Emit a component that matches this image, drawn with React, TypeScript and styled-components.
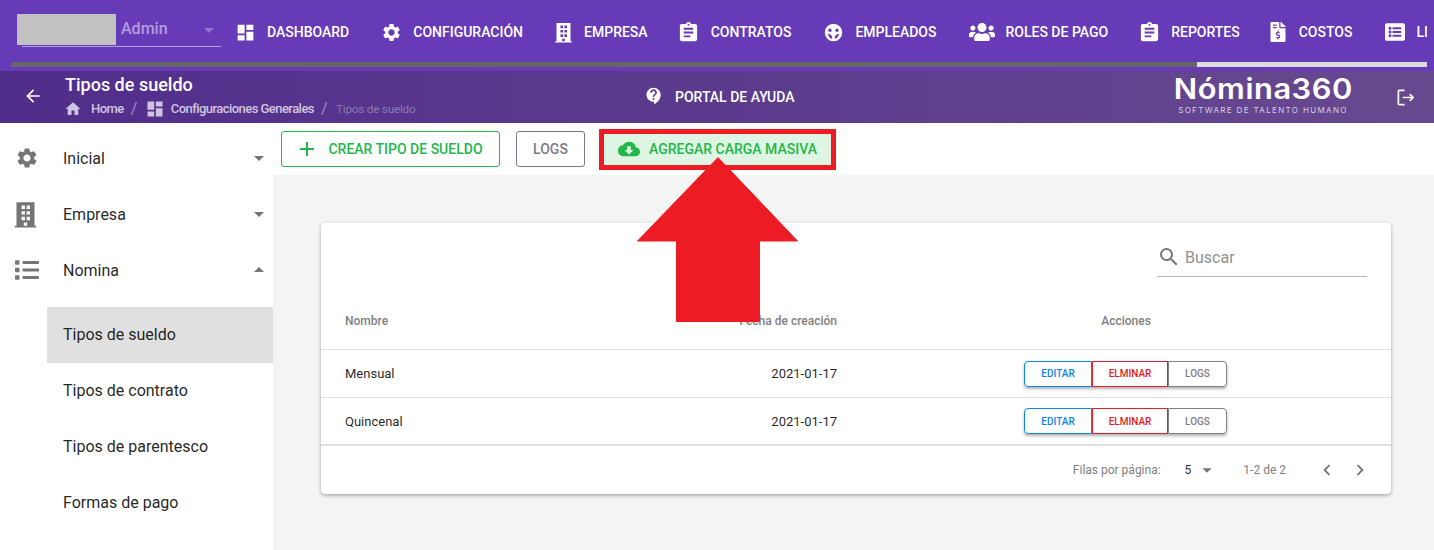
import React from "react";
import styled, { createGlobalStyle } from "styled-components";
import {
  MdDashboard, MdSettings, MdAssignment, MdArrowBack, MdHome, MdContactSupport, MdCloudDownload,
  MdSearch, MdChevronLeft, MdChevronRight, MdAdd, MdArrowDropDown, MdArrowDropUp,
} from "react-icons/md";
import { FaUsers, FaFileInvoiceDollar, FaList, FaListAlt } from "react-icons/fa";

const Global = createGlobalStyle`
  html, body { margin: 0; padding: 0; height: 100%; overflow: hidden; background: #fff; }
  body { font-family: Roboto, "Liberation Sans", sans-serif; }
  * { box-sizing: border-box; }
`;

const Page = styled.div`
  position: relative;
  width: 1434px;
  height: 550px;
  overflow: hidden;
  display: flex;
  flex-direction: column;
`;

const TopNav = styled.header`
  height: 71px;
  background: #673ab7;
  display: flex;
  flex-direction: column;
  flex-shrink: 0;
`;

const NavRow = styled.div`
  height: 62px;
  display: flex;
  align-items: center;
  padding: 2px 0 0 22px;
  margin-right: 7px;
  overflow: hidden;
`;

const RoleSelect = styled.div`
  width: 199px;
  height: 33px;
  margin-top: -3px;
  margin-right: 17px;
  flex-shrink: 0;
  display: flex;
  align-items: center;
  border-bottom: 1px solid #b39ddb;
  color: #b39ddb;
  font-size: 16px;
  font-weight: 500;
`;

const HiddenName = styled.div`
  width: 99px;
  height: 31px;
  margin: -2px 5px 0 -5px;
  background: #c1c1c1;
  flex-shrink: 0;
`;

const RoleLabel = styled.span`
  margin-top: -4px;
  flex: 1;
`;

const Caret = styled.span<{ $size?: number; $color: string; $ml?: number }>`
  display: inline-flex;
  color: ${(p) => p.$color};
  font-size: ${(p) => p.$size ?? 24}px;
  margin-left: ${(p) => p.$ml ?? 0}px;
  flex-shrink: 0;
`;

const NavItem = styled.div<{ $ml: number }>`
  display: flex;
  align-items: center;
  flex-shrink: 0;
  margin-left: ${(p) => p.$ml}px;
  margin-right: 33px;
  color: #fff;
  font-size: 14px;
  font-weight: 500;
  white-space: nowrap;
  &:last-child { margin-right: 0; }
`;

const NavIcon = styled.span<{ $w: number; $gap: number; $size: number }>`
  width: ${(p) => p.$w}px;
  margin-right: ${(p) => p.$gap}px;
  display: flex;
  justify-content: center;
  flex-shrink: 0;
  font-size: ${(p) => p.$size}px;
  svg { flex-shrink: 0; display: block; }
`;

const Progress = styled.div`
  height: 5px;
  margin: 0 7px 0 11px;
  background: #dcdcdc;
`;

const ProgressFill = styled.div`
  height: 100%;
  background: #666666;
`;

const SubHeader = styled.div`
  height: 52px;
  flex-shrink: 0;
  display: flex;
  align-items: center;
  background: linear-gradient(90deg, #512d8b 0%, #5c3b8e 50%, #67498f 100%);
  color: #fff;
`;

const TitleZone = styled.div`
  width: 646px;
  display: flex;
  align-items: center;
  padding-left: 21px;
  flex-shrink: 0;
`;

const BackIcon = styled.span`
  width: 24px;
  margin-right: 20px;
  margin-top: -2px;
  display: flex;
  font-size: 20px;
  justify-content: center;
`;

const TitleBlock = styled.div`
  display: flex;
  flex-direction: column;
  margin-top: -2px;
`;

const PageTitle = styled.div`
  font-size: 18px;
  font-weight: 500;
  line-height: 22px;
`;

const Crumbs = styled.div`
  display: flex;
  align-items: center;
  font-size: 13px;
  line-height: 18px;
  margin-top: 3px;
  color: #cfc4e2;
  font-weight: 500;
  letter-spacing: -0.55px;
`;

const CrumbIcon = styled.span<{ $gap: number; $ml?: number; $size: number }>`
  display: flex;
  font-size: ${(p) => p.$size}px;
  margin-left: ${(p) => p.$ml ?? 0}px;
  margin-right: ${(p) => p.$gap}px;
`;

const CrumbSep = styled.span`
  margin: 0 8px 0 7px;
  font-size: 16px;
  font-weight: 400;
  color: #9f8dbf;
`;

const CrumbLast = styled.span`
  font-weight: 400;
  font-size: 11.800px;
  letter-spacing: -0.25px;
  margin-left: 1px;
  color: #8d79b0;
`;

const Portal = styled.div`
  width: 528px;
  flex-shrink: 0;
  display: flex;
  align-items: center;
  font-size: 14px;
  font-weight: 500;
  white-space: nowrap;
`;

const PortalIcon = styled.span`
  width: 16px;
  margin-right: 13px;
  margin-top: -3px;
  display: flex;
  justify-content: center;
  font-size: 20px;
  svg { flex-shrink: 0; }
`;

const Logo = styled.div`
  width: 178px;
  flex-shrink: 0;
  display: flex;
  flex-direction: column;
  align-items: center;
  margin-top: -5px;
`;

const LogoName = styled.div`
  font-family: "Inter", "Noto Sans", sans-serif;
  font-size: 28px;
  font-weight: 600;
  line-height: 30px;
  letter-spacing: 0.5px;
  white-space: nowrap;
  transform: scaleX(1.1);
`;

const LogoTag = styled.div`
  font-family: "Inter", "Noto Sans", sans-serif;
  font-size: 8px;
  line-height: 9px;
  letter-spacing: 1.350px;
  color: #d7cfe6;
  white-space: nowrap;
  margin-top: 2px;
`;

const LogoutIcon = styled.span`
  margin-left: 44px;
  display: flex;
`;

const Body = styled.div`
  flex: 1;
  display: flex;
  min-height: 0;
`;

const Sidebar = styled.nav`
  width: 273px;
  flex-shrink: 0;
  padding-top: 7px;
  background: #fff;
`;

const SideItem = styled.div`
  height: 56px;
  display: flex;
  align-items: center;
  padding-left: 15px;
  padding-right: 2px;
  font-size: 16px;
  color: rgba(0, 0, 0, 0.87);
`;

const SideIcon = styled.span<{ $shift?: number }>`
  width: 24px;
  margin-right: 24px;
  display: flex;
  justify-content: center;
  color: #757575;
  font-size: 24px;
  svg { flex-shrink: 0; margin-left: ${(p) => p.$shift ?? 0}px; }
`;

const SideLabel = styled.span`
  flex: 1;
`;

const SubList = styled.div`
  padding-top: 9px;
`;

const SubItem = styled.div<{ $active?: boolean }>`
  height: 56px;
  margin-left: 47px;
  padding: 0 0 2px 16px;
  display: flex;
  align-items: center;
  font-size: 16px;
  color: rgba(0, 0, 0, 0.87);
  background: ${(p) => (p.$active ? "#e0e0e0" : "transparent")};
`;

const Main = styled.main`
  flex: 1;
  min-width: 0;
  display: flex;
  flex-direction: column;
`;

const Toolbar = styled.div`
  height: 52px;
  flex-shrink: 0;
  display: flex;
  align-items: center;
  padding-left: 8px;
`;

const OutlineBtn = styled.div<{ $color: string; $w: number; $ml?: number; $pr?: number }>`
  width: ${(p) => p.$w}px;
  height: 36px;
  margin-left: ${(p) => p.$ml ?? 0}px;
  padding-right: ${(p) => p.$pr ?? 0}px;
  border: 1px solid ${(p) => p.$color};
  border-radius: 3px;
  color: ${(p) => p.$color};
  background: #fff;
  font-size: 14px;
  font-weight: 500;
  display: flex;
  align-items: center;
  justify-content: center;
  white-space: nowrap;
`;

const BtnIcon = styled.span<{ $gap: number; $size: number }>`
  display: flex;
  font-size: ${(p) => p.$size}px;
  margin-right: ${(p) => p.$gap}px;
`;

const BulkBtn = styled.div`
  width: 237px;
  height: 41px;
  margin-left: 14px;
  margin-top: 1px;
  padding-bottom: 2px;
  border: 5px solid #ed1c24;
  background: #dff5e3;
  color: #23b64a;
  font-size: 14px;
  font-weight: 500;
  display: flex;
  align-items: center;
  justify-content: center;
  white-space: nowrap;
`;

const Content = styled.div`
  flex: 1;
  background: #f4f4f4;
  padding: 48px 43px 0 48px;
`;

const Card = styled.section`
  height: 271px;
  background: #fff;
  border-radius: 4px;
  box-shadow: 0 2px 4px -1px rgba(0, 0, 0, 0.2), 0 1px 5px 0 rgba(0, 0, 0, 0.12), 0 1px 3px 0 rgba(0, 0, 0, 0.1);
  display: flex;
  flex-direction: column;
`;

const SearchRow = styled.div`
  height: 70px;
  display: flex;
  justify-content: flex-end;
  align-items: flex-start;
  padding: 18px 24px 0 0;
`;

const SearchBox = styled.div`
  width: 210px;
  height: 36px;
  display: flex;
  align-items: center;
  border-bottom: 1px solid #b5b5b5;
  color: #8f8f8f;
  font-size: 16px;
  padding-bottom: 3px;
`;

const SearchIcon = styled.span`
  display: flex;
  font-size: 24px;
  margin-right: 4px;
  color: #757575;
`;

const Row = styled.div<{ $h: number; $bw?: number }>`
  height: ${(p) => p.$h}px;
  display: grid;
  grid-template-columns: 270px 270px 530px;
  align-items: center;
  border-bottom: ${(p) => p.$bw ?? 1}px solid #e0e0e0;
`;

const NameCell = styled.div<{ $head?: boolean }>`
  padding-left: 24px;
  font-size: ${(p) => (p.$head ? 12 : 13)}px;
  font-weight: ${(p) => (p.$head ? 500 : 400)};
  color: ${(p) => (p.$head ? "#808080" : "rgba(0,0,0,0.87)")};
`;

const DateCell = styled(NameCell)`
  padding: 0 24px 0 0;
  text-align: right;
`;

const ActionCell = styled.div`
  display: flex;
  justify-content: center;
  font-size: 12px;
  font-weight: 500;
  color: #808080;
`;

const ActionGroup = styled.div`
  display: flex;
  margin-left: -1px;
  border-radius: 4px;
  box-shadow: 0 2px 3px rgba(0, 0, 0, 0.3);
`;

const ActionBtn = styled.div<{ $color: string; $w: number; $pos?: "l" | "r" }>`
  width: ${(p) => p.$w}px;
  height: 26px;
  border: 1px solid ${(p) => p.$color};
  color: ${(p) => p.$color};
  background: #fff;
  font-size: 10px;
  font-weight: 500;
  display: flex;
  align-items: center;
  justify-content: center;
  border-radius: ${(p) => (p.$pos === "l" ? "4px 0 0 4px" : p.$pos === "r" ? "0 4px 4px 0" : "0")};
`;

const Footer = styled.div`
  flex: 1;
  display: flex;
  align-items: center;
  justify-content: flex-end;
  font-size: 12px;
  color: #808080;
  padding-right: 20px;
`;

const PageSize = styled.span`
  display: flex;
  align-items: center;
  margin: 0 25px 0 24px;
  color: rgba(0, 0, 0, 0.87);
  font-size: 12px;
`;

const PageRange = styled.span`
  margin-right: 19px;
`;

const PagerIcon = styled.span`
  display: flex;
  font-size: 22px;
  color: #757575;
  margin-left: 11px;
`;

const ArrowOverlay = styled.svg`
  position: absolute;
  left: 637px;
  top: 157px;
`;

const BuildingGlyph = ({ size = 24 }: { size?: number }) => (
  <svg width={size} height={size} viewBox="0 0 24 24" fill="currentColor">
    <path
      fillRule="evenodd"
      d="M4 1h16v21h1.500v1.500h-19V22H4V1zm4.500 3v3h3V4h-3zm4.500 0v3h3V4h-3zM8.500 9v3h3V9h-3zm4.500 0v3h3V9h-3zM8.500 14v3h3v-3h-3zm4.500 0v3h3v-3h-3zM10.500 19v3.100h3V19h-3z"
    />
  </svg>
);

const FaceGlyph = ({ size = 24 }: { size?: number }) => (
  <svg width={size} height={size} viewBox="0 0 24 24" fill="currentColor">
    <path
      fillRule="evenodd"
      d="M12 2a10 10 0 1 0 0 20 10 10 0 0 0 0-20zM8 7.500a2 2 0 1 1 0 4 2 2 0 0 1 0-4zm8 0a2 2 0 1 1 0 4 2 2 0 0 1 0-4zM5.500 13.500c2 .3 3.700 1.200 5 3v3c-2.400-.5-4.300-3-5-6zm13 0c-.7 3-2.600 5.500-5 6v-3c1.300-1.800 3-2.700 5-3z"
    />
  </svg>
);

const LogoutGlyph = () => (
  <svg width="19" height="19" viewBox="0 0 20 20" fill="none" stroke="#fff" strokeWidth="1.800">
    <path d="M9 2.500H3.500a1 1 0 0 0-1 1v13a1 1 0 0 0 1 1H9" />
    <path d="M7 10h11M14.500 6.500 18 10l-3.500 3.500" />
  </svg>
);

type NavDef = { label: string; icon: React.ReactNode; w: number; gap: number; size: number; ml?: number };

const navItems: NavDef[] = [
  { label: "DASHBOARD", icon: <MdDashboard />, w: 15, gap: 14, size: 21 },
  { label: "CONFIGURACIÓN", icon: <MdSettings />, w: 17, gap: 13, size: 21, ml: 1 },
  { label: "EMPRESA", icon: <BuildingGlyph size={21} />, w: 17, gap: 12, size: 20, ml: -1 },
  { label: "CONTRATOS", icon: <MdAssignment />, w: 16, gap: 14, size: 23 },
  { label: "EMPLEADOS", icon: <FaceGlyph size={21} />, w: 17, gap: 13, size: 21, ml: 1 },
  { label: "ROLES DE PAGO", icon: <FaUsers />, w: 26, gap: 10, size: 26 },
  { label: "REPORTES", icon: <MdAssignment />, w: 16, gap: 14, size: 23 },
  { label: "COSTOS", icon: <FaFileInvoiceDollar />, w: 15, gap: 13, size: 20, ml: -2 },
  { label: "LI", icon: <FaListAlt />, w: 20, gap: 11, size: 20 },
];

const sideItems = [
  { label: "Inicial", icon: <MdSettings />, open: false, shift: 0 },
  { label: "Empresa", icon: <BuildingGlyph size={27} />, open: false, shift: -3 },
  { label: "Nomina", icon: <FaList />, open: true, shift: 0 },
];

const subItems = ["Tipos de sueldo", "Tipos de contrato", "Tipos de parentesco", "Formas de pago"];
const rows = ["Mensual", "Quincenal"];

export default function App() {
  return (
    <Page>
      <Global />
      <TopNav>
        <NavRow>
          <RoleSelect>
            <HiddenName />
            <RoleLabel>Admin</RoleLabel>
            <Caret $color="#9575cd">
              <MdArrowDropDown />
            </Caret>
          </RoleSelect>
          {navItems.map((n) => (
            <NavItem key={n.label} $ml={n.ml ?? 0}>
              <NavIcon $w={n.w} $gap={n.gap} $size={n.size}>
                {n.icon}
              </NavIcon>
              {n.label}
            </NavItem>
          ))}
        </NavRow>
        <Progress>
          <ProgressFill style={{ width: `${((1197 - 11) / (1427 - 11)) * 100}%` }} />
        </Progress>
      </TopNav>
      <SubHeader>
        <TitleZone>
          <BackIcon>
            <MdArrowBack />
          </BackIcon>
          <TitleBlock>
            <PageTitle>Tipos de sueldo</PageTitle>
            <Crumbs>
              <CrumbIcon $gap={9} $ml={-1} $size={18}>
                <MdHome />
              </CrumbIcon>
              Home
              <CrumbSep>/</CrumbSep>
              <CrumbIcon $gap={6} $size={20}>
                <MdDashboard />
              </CrumbIcon>
              Configuraciones Generales
              <CrumbSep>/</CrumbSep>
              <CrumbLast>Tipos de sueldo</CrumbLast>
            </Crumbs>
          </TitleBlock>
        </TitleZone>
        <Portal>
          <PortalIcon>
            <MdContactSupport />
          </PortalIcon>
          PORTAL DE AYUDA
        </Portal>
        <Logo>
          <LogoName>Nómina360</LogoName>
          <LogoTag>SOFTWARE DE TALENTO HUMANO</LogoTag>
        </Logo>
        <LogoutIcon>
          <LogoutGlyph />
        </LogoutIcon>
      </SubHeader>
      <Body>
        <Sidebar>
          {sideItems.map((s) => (
            <SideItem key={s.label}>
              <SideIcon $shift={s.shift}>{s.icon}</SideIcon>
              <SideLabel>{s.label}</SideLabel>
              <Caret $color="#757575">{s.open ? <MdArrowDropUp /> : <MdArrowDropDown />}</Caret>
            </SideItem>
          ))}
          <SubList>
            {subItems.map((s, i) => (
              <SubItem key={s} $active={i === 0}>
                {s}
              </SubItem>
            ))}
          </SubList>
        </Sidebar>
        <Main>
          <Toolbar>
            <OutlineBtn $color="#23b64a" $w={219} $pr={3}>
              <BtnIcon $gap={9} $size={24}>
                <MdAdd />
              </BtnIcon>
              CREAR TIPO DE SUELDO
            </OutlineBtn>
            <OutlineBtn $color="#7d7a85" $w={69} $ml={16}>
              LOGS
            </OutlineBtn>
            <BulkBtn>
              <BtnIcon $gap={9} $size={22}>
                <MdCloudDownload />
              </BtnIcon>
              AGREGAR CARGA MASIVA
            </BulkBtn>
          </Toolbar>
          <Content>
            <Card>
              <SearchRow>
                <SearchBox>
                  <SearchIcon>
                    <MdSearch />
                  </SearchIcon>
                  Buscar
                </SearchBox>
              </SearchRow>
              <Row $h={57}>
                <NameCell $head>Nombre</NameCell>
                <DateCell $head>Fecha de creación</DateCell>
                <ActionCell>Acciones</ActionCell>
              </Row>
              {rows.map((r, i) => (
                <Row key={r} $h={48} $bw={i === rows.length - 1 ? 2 : 1}>
                  <NameCell>{r}</NameCell>
                  <DateCell>2021-01-17</DateCell>
                  <ActionCell>
                    <ActionGroup>
                      <ActionBtn $color="#0d84e8" $w={68} $pos="l">EDITAR</ActionBtn>
                      <ActionBtn $color="#e0202a" $w={76}>ELMINAR</ActionBtn>
                      <ActionBtn $color="#837e88" $w={59} $pos="r">LOGS</ActionBtn>
                    </ActionGroup>
                  </ActionCell>
                </Row>
              ))}
              <Footer>
                Filas por página:
                <PageSize>
                  5
                  <Caret $color="#757575" $size={22} $ml={5}>
                    <MdArrowDropDown />
                  </Caret>
                </PageSize>
                <PageRange>1-2 de 2</PageRange>
                <PagerIcon>
                  <MdChevronLeft />
                </PagerIcon>
                <PagerIcon>
                  <MdChevronRight />
                </PagerIcon>
              </Footer>
            </Card>
          </Content>
        </Main>
      </Body>
      <ArrowOverlay width="161" height="165" viewBox="0 0 161 165">
        <polygon
          points="81,0.500 160.500,84 122.500,84 122.500,164.500 39.500,164.500 39.500,84 0.500,84"
          fill="#ed1c24"
          stroke="#ed1c24"
          strokeWidth="1"
          strokeLinejoin="round"
        />
      </ArrowOverlay>
    </Page>
  );
}
